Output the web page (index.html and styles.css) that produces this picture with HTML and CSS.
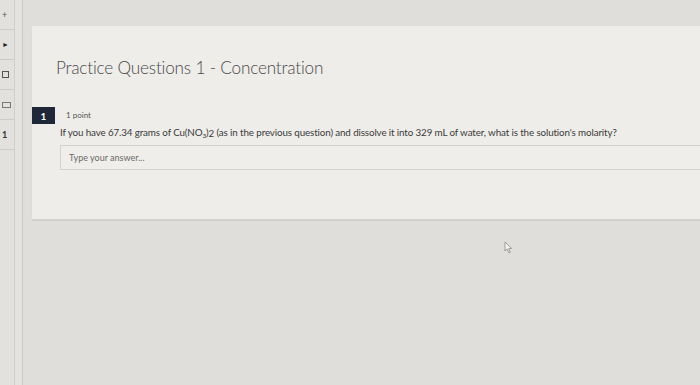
FILE: index.html
```html
<!DOCTYPE html>
<html>
<head>
<meta charset="utf-8">
<link rel="stylesheet" href="styles.css">
</head>
<body>
<div class="screen">
  <nav class="rail">
    <div class="rail-item"><span class="glyph">+</span></div>
    <div class="rail-item"><span class="glyph arrow">&#9658;</span></div>
    <div class="rail-item"><span class="box"></span></div>
    <div class="rail-item"><span class="box wide"></span></div>
    <div class="rail-item"><span class="glyph num">1</span></div>
  </nav>
  <div class="gutter"></div>
  <main class="main">
    <section class="card">
      <h1 class="title">Practice Questions 1 - Concentration</h1>
      <div class="question">
        <span class="badge">1</span>
        <div class="qbody">
          <div class="points">1 point</div>
          <p class="qtext">If you have 67.34 grams of Cu(NO<sub>3</sub>)<span class="two">2</span> (as in the previous question) and dissolve it into 329 mL of water, what is the solution's molarity?</p>
          <div class="answer">Type your answer...</div>
        </div>
      </div>
    </section>
    <div class="below">
      <svg class="cursor" width="9" height="13" viewBox="0 0 9 13"><path d="M1 1 L1 10 L3.2 8 L5 12 L6.4 11.3 L4.7 7.6 L7.6 7.4 Z" fill="#f4f3f0" stroke="#8a8a88" stroke-width="0.8"/></svg>
    </div>
  </main>
</div>
</body>
</html>
```

FILE: styles.css
```css
* { box-sizing: border-box; }
html, body { margin: 0; padding: 0; }
body {
  width: 700px;
  height: 385px;
  overflow: hidden;
  background: #dddcd9;
  font-family: Lato, "Liberation Sans", sans-serif;
}
.screen {
  display: flex;
  height: 385px;
}
.rail {
  width: 15px;
  flex: none;
  background: #e2e1dd;
  border-right: 1px solid #cfceca;
  display: flex;
  flex-direction: column;
}
.rail-item {
  height: 30px;
  border-bottom: 1px solid #cccbc7;
  display: flex;
  align-items: center;
  justify-content: flex-start;
  padding-left: 2px;
}
.glyph {
  font-size: 9px;
  color: #555;
  line-height: 1;
}
.glyph.arrow { font-size: 7px; color: #222; }
.glyph.num { font-size: 9px; color: #333; font-weight: bold; }
.box {
  width: 7px;
  height: 7px;
  border: 1px solid #555;
}
.box.wide { width: 9px; height: 6px; border-color: #777; }
.gutter {
  width: 8px;
  flex: none;
  background: #e4e3df;
  border-right: 1px solid #cdccc8;
}
.main {
  flex: 1;
  padding-top: 26px;
  padding-left: 9px;
  background: #dfdedb;
  display: flex;
  flex-direction: column;
}
.card {
  background: #eeede9;
  height: 194px;
  border-bottom: 1px solid #d2d1cc;
  box-shadow: 0 1px 1px rgba(0,0,0,0.06);
  padding: 31px 0 0 24px;
}
.title {
  margin: 0;
  font-weight: 300;
  font-size: 17.2px;
  color: #4a4a4a;
  letter-spacing: -0.2px;
  line-height: 22px;
}
.question {
  display: flex;
  margin-top: 28px;
  margin-left: -24px;
}
.badge {
  width: 23px;
  height: 17px;
  flex: none;
  background: #1e2838;
  color: #fff;
  font-size: 10px;
  font-weight: bold;
  display: flex;
  align-items: center;
  justify-content: center;
}
.qbody {
  flex: 1;
  padding-left: 5px;
}
.points {
  font-size: 8px;
  color: #555;
  padding-left: 6px;
  margin-top: 3px;
  line-height: 10px;
}
.qtext {
  margin: 6px 0 0 0;
  font-size: 9.8px;
  color: #3a3a3a;
  line-height: 13px;
  white-space: nowrap;
  letter-spacing: -0.12px;
}
.qtext sub { font-size: 6.5px; line-height: 0; vertical-align: -2px; }
.two { font-size: 9.8px; position: relative; top: 1px; }
.answer {
  margin-top: 6px;
  height: 25px;
  border: 1px solid #d3d2ce;
  border-right: none;
  background: #efeeea;
  font-size: 9px;
  color: #6a6a6a;
  padding-left: 8px;
  display: flex;
  align-items: center;
}
.below {
  flex: 1;
  padding: 21px 0 0 472px;
}
.cursor { display: block; }
```
